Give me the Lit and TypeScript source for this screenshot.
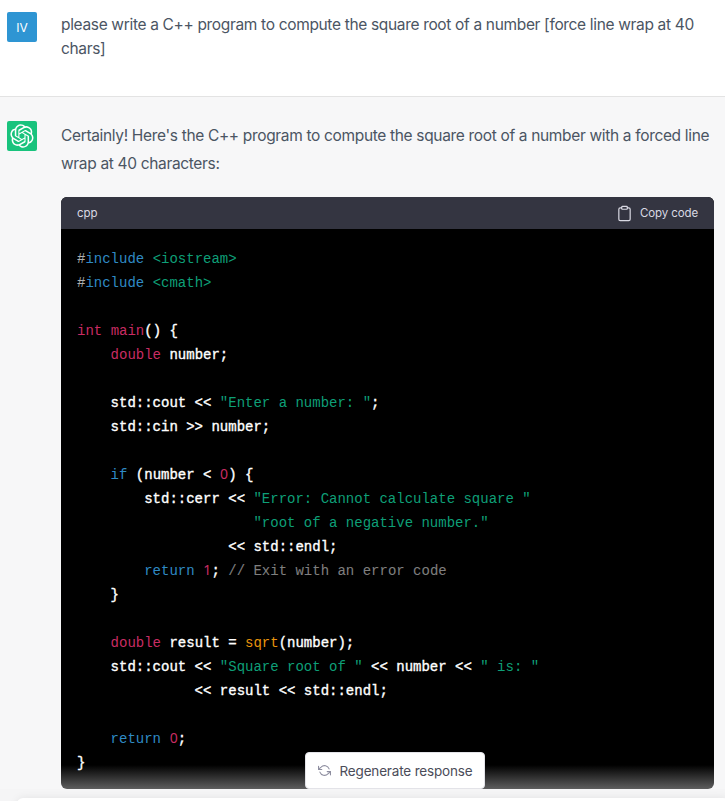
import { LitElement, html, css } from "lit";
import { customElement } from "lit/decorators.js";

type Tok = [string, string];
const K = "k", S = "s", N = "n", F = "f", C = "c", P = "p", R = "r", T = "t";
const sp = (n: number) => " ".repeat(n);

const lines: Tok[][] = [
  [[P, "#"], [K, "include"], [T, " "], [S, "<iostream>"]],
  [[P, "#"], [K, "include"], [T, " "], [S, "<cmath>"]],
  [],
  [[R, "int"], [T, " "], [R, "main"], [T, "() {"]],
  [[T, sp(4)], [R, "double"], [T, " number;"]],
  [],
  [[T, sp(4) + "std::cout << "], [S, "\"Enter a number: \""], [T, ";"]],
  [[T, sp(4) + "std::cin >> number;"]],
  [],
  [[T, sp(4)], [K, "if"], [T, " (number < "], [N, "0"], [T, ") {"]],
  [[T, sp(8) + "std::cerr << "], [S, "\"Error: Cannot calculate square \""]],
  [[T, sp(21)], [S, "\"root of a negative number.\""]],
  [[T, sp(18) + "<< std::endl;"]],
  [[T, sp(8)], [K, "return"], [T, " "], [N, "1"], [T, "; "], [C, "// Exit with an error code"]],
  [[T, sp(4) + "}"]],
  [],
  [[T, sp(4)], [R, "double"], [T, " result = "], [F, "sqrt"], [T, "(number);"]],
  [[T, sp(4) + "std::cout << "], [S, "\"Square root of \""], [T, " << number << "], [S, "\" is: \""]],
  [[T, sp(14) + "<< result << std::endl;"]],
  [],
  [[T, sp(4)], [K, "return"], [T, " "], [N, "0"], [T, ";"]],
  [[T, "}"]],
];

const logo = "M37.5324 16.8707C37.9808 15.5241 38.1363 14.0974 37.9886 12.6859C37.8409 11.2744 37.3934 9.91076 36.676 8.68622C35.6126 6.83404 33.9882 5.3676 32.0373 4.4985C30.0864 3.62941 27.9098 3.40259 25.8215 3.85078C24.8796 2.7893 23.7219 1.94125 22.4257 1.36341C21.1295 0.785575 19.7249 0.491269 18.3058 0.500197C16.1708 0.495044 14.0893 1.16803 12.3614 2.42214C10.6335 3.67624 9.34853 5.44666 8.6917 7.47815C7.30085 7.76286 5.98686 8.3414 4.8377 9.17505C3.68854 10.0087 2.73073 11.0782 2.02839 12.312C0.956464 14.1591 0.498905 16.2988 0.721698 18.4228C0.944492 20.5467 1.83612 22.5449 3.268 24.1293C2.81966 25.4759 2.66413 26.9026 2.81182 28.3141C2.95951 29.7256 3.40701 31.0892 4.12437 32.3138C5.18791 34.1659 6.8123 35.6322 8.76321 36.5013C10.7141 37.3704 12.8907 37.5973 14.9789 37.1492C15.9208 38.2107 17.0786 39.0587 18.3747 39.6366C19.6709 40.2144 21.0755 40.5087 22.4946 40.4998C24.6307 40.5054 26.7133 39.8321 28.4418 38.5772C30.1704 37.3223 31.4556 35.5506 32.1119 33.5179C33.5027 33.2332 34.8167 32.6547 35.9659 31.821C37.115 30.9874 38.0728 29.9178 38.7752 28.684C39.8458 26.8371 40.3023 24.6979 40.0789 22.5748C39.8556 20.4517 38.9639 18.4544 37.5324 16.8707ZM22.4978 37.8849C20.7443 37.8874 19.0459 37.2733 17.6994 36.1501C17.7601 36.117 17.8666 36.0586 17.936 36.0161L25.9004 31.4156C26.1003 31.3019 26.2663 31.137 26.3813 30.9378C26.4964 30.7386 26.5563 30.5124 26.5549 30.2825V19.0542L29.9213 20.998C29.9389 21.0068 29.9541 21.0198 29.9656 21.0359C29.977 21.052 29.9842 21.0707 29.9867 21.0902V30.3889C29.9842 32.375 29.1946 34.2791 27.7909 35.6841C26.3872 37.0892 24.4838 37.8806 22.4978 37.8849ZM6.39227 31.0064C5.51397 29.4888 5.19742 27.7107 5.49804 25.9832C5.55718 26.0187 5.66048 26.0818 5.73461 26.1244L13.699 30.7248C13.8975 30.8408 14.1233 30.902 14.3532 30.902C14.583 30.902 14.8088 30.8408 15.0073 30.7248L24.731 25.1103V28.9979C24.7321 29.0177 24.7283 29.0376 24.7199 29.0556C24.7115 29.0736 24.6988 29.0893 24.6829 29.1012L16.6317 33.7497C14.9096 34.7416 12.8643 35.0097 10.9447 34.4954C9.02506 33.9811 7.38785 32.7263 6.39227 31.0064ZM4.29707 13.6194C5.17156 12.0998 6.55279 10.9364 8.19885 10.3327C8.19885 10.4013 8.19491 10.5228 8.19491 10.6071V19.808C8.19351 20.0378 8.25334 20.2638 8.36823 20.4629C8.48312 20.6619 8.64893 20.8267 8.84863 20.9404L18.5723 26.5542L15.206 28.4979C15.1894 28.5089 15.1703 28.5155 15.1505 28.5173C15.1307 28.5191 15.1107 28.516 15.0924 28.5082L7.04046 23.8557C5.32135 22.8601 4.06716 21.2235 3.55289 19.3046C3.03862 17.3858 3.30624 15.3413 4.29707 13.6194ZM31.955 20.0556L22.2312 14.4411L25.5976 12.4981C25.6142 12.4872 25.6333 12.4805 25.6531 12.4787C25.6729 12.4769 25.6928 12.4801 25.7111 12.4879L33.7631 17.1364C34.9967 17.849 36.0017 18.8982 36.6606 20.1613C37.3194 21.4244 37.6047 22.849 37.4832 24.2684C37.3617 25.6878 36.8382 27.0432 35.9743 28.1759C35.1103 29.3086 33.9415 30.1717 32.6047 30.6641C32.6047 30.5947 32.6047 30.4733 32.6047 30.3889V21.188C32.6066 20.9586 32.5474 20.7328 32.4332 20.5338C32.319 20.3348 32.154 20.1698 31.955 20.0556ZM35.3055 15.0128C35.2464 14.9765 35.1431 14.9142 35.069 14.8717L27.1045 10.2712C26.906 10.1554 26.6803 10.0943 26.4504 10.0943C26.2206 10.0943 25.9948 10.1554 25.7963 10.2712L16.0726 15.8858V11.9982C16.0715 11.9783 16.0753 11.9585 16.0837 11.9405C16.0921 11.9225 16.1048 11.9068 16.1207 11.8949L24.1719 7.25025C25.4053 6.53903 26.8158 6.19376 28.2383 6.25482C29.6608 6.31589 31.0364 6.78077 32.2044 7.59508C33.3723 8.40939 34.2842 9.53945 34.8334 10.8531C35.3826 12.1667 35.5464 13.6095 35.3055 15.0128ZM14.2424 21.9419L10.8752 19.9981C10.8576 19.9893 10.8423 19.9763 10.8309 19.9602C10.8195 19.9441 10.8122 19.9254 10.8098 19.9058V10.6071C10.8107 9.18295 11.2173 7.78848 11.9819 6.58696C12.7466 5.38544 13.8377 4.42659 15.1275 3.82264C16.4173 3.21869 17.8524 2.99464 19.2649 3.1767C20.6775 3.35876 22.0089 3.93941 23.1034 4.85067C23.0427 4.88379 22.937 4.94215 22.8668 4.98473L14.9024 9.58517C14.7025 9.69878 14.5366 9.86356 14.4215 10.0626C14.3065 10.2616 14.2466 10.4877 14.2479 10.7175L14.2424 21.9419ZM16.071 17.9991L20.4018 15.4978L24.7325 17.9975V22.9985L20.4018 25.4983L16.071 22.9985V17.9991Z";

@customElement("app-root")
export class AppRoot extends LitElement {
  static styles = css`
    :host { display: block; position: relative; height: 801px; overflow: hidden; background: #f7f7f8;
      font-family: Inter, "Liberation Sans", sans-serif; color: #4b5563; }
    .row { display: flex; gap: 24px; padding: 12px 11px 0 7px; }
    .user { background: #fff; height: 84px; border-bottom: 1px solid #e3e3e3; }
    .bot { padding-top: 24px; }
    .av { flex: none; width: 30px; height: 30px; border-radius: 2px; display: flex; align-items: center;
      justify-content: center; color: #fff; }
    .iv { background: #2e95d3; font-size: 12px; }
    .gpt { background: #19c37d; }
    .gpt svg { width: 24px; height: 24px; }
    .body { flex: 1; min-width: 0; }
    p { margin: 0; font-size: 15.5px; letter-spacing: -0.335px; padding-top: 1px; }
    .msg1 { line-height: 24px; }
    .msg2 { line-height: 28px; margin-bottom: 19px; }
    .code { border-radius: 6px; overflow: hidden; background: #000; }
    .head { height: 32px; background: #343541; color: #d9d9e3; display: flex; align-items: center;
      justify-content: space-between; padding: 0 16px; font-size: 11.5px; letter-spacing: -0.1px; }
    .copy { display: flex; align-items: center; gap: 7px; }
    .copy svg { width: 17px; height: 17px; }
    pre { margin: 0; padding: 18px 16px 14px; font-family: "Liberation Mono", monospace; font-size: 14px; line-height: 24px;
      color: #fff; -webkit-text-stroke: 0.35px #fff; }
    .line { display: block; height: 24px; white-space: pre; }
    .k, .s, .n, .f, .c, .r, .p { -webkit-text-stroke: 0; }
    .k { color: #2f8ac4; }
    .s { color: #0e9f77; }
    .n { color: #c92c63; font-family: "Noto Sans", sans-serif; display: inline-block; width: 8.4px;
      text-align: center; line-height: 14px; }
    .r { color: #c92c63; }
    .f { color: #e9950c; }
    .c { color: #ffffff80; }
    .p { color: #ffffffb0; }
    .fade { position: absolute; left: 0; right: 0; bottom: 12px; height: 24px;
      background: linear-gradient(to bottom, rgba(247,247,248,0), rgba(247,247,248,0.38)); pointer-events: none; }
    .under { position: absolute; left: 0; right: 0; bottom: 0; height: 12px; background: #f5f5f6; }
    .input { position: absolute; left: 17px; right: -4px; top: 9px; height: 20px; background: #fff;
      border-radius: 6px; box-shadow: 0 0 8px rgba(0,0,0,.08); }
    .regen { position: absolute; left: 305px; top: 752px; width: 180px; height: 37px; box-sizing: border-box;
      background: #fff; border: 1px solid #e3e3e8; border-radius: 4px; display: flex; align-items: center;
      justify-content: center; gap: 9px; font-size: 13.5px; color: #4b4c59; letter-spacing: -0.17px; }
    .regen svg { width: 13px; height: 13px; color: #8e8ea0; }
  `;

  render() {
    return html`
      <div class="row user">
        <div class="av iv">IV</div>
        <div class="body">
          <p class="msg1">please write a C++ program to compute the square root of a number [force line wrap at 40 chars]</p>
        </div>
      </div>
      <div class="row bot">
        <div class="av gpt">
          <svg viewBox="0 0 41 41" fill="none"><path fill="currentColor" d=${logo}></path></svg>
        </div>
        <div class="body">
          <p class="msg2">Certainly! Here's the C++ program to compute the square root of a number with a forced line wrap at 40 characters:</p>
          <div class="code">
            <div class="head">
              <span>cpp</span>
              <span class="copy">
                <svg viewBox="0 0 24 24" fill="none" stroke="currentColor" stroke-width="1.7" stroke-linecap="round" stroke-linejoin="round">
                  <path d="M16 4h2a2 2 0 0 1 2 2v14a2 2 0 0 1-2 2H6a2 2 0 0 1-2-2V6a2 2 0 0 1 2-2h2"></path>
                  <rect x="8" y="2" width="8" height="4" rx="1" ry="1"></rect>
                </svg>
                Copy code
              </span>
            </div>
            <pre>${lines.map(
              (l) => html`<span class="line">${l.map(([c, t]) => html`<span class=${c}>${t}</span>`)}</span>`
            )}</pre>
          </div>
        </div>
      </div>
      <div class="fade"></div>
      <div class="under"><div class="input"></div></div>
      <div class="regen">
        <svg viewBox="0 0 24 24" fill="none" stroke="currentColor" stroke-width="2" stroke-linecap="round" stroke-linejoin="round">
          <polyline points="1 4 1 10 7 10"></polyline>
          <polyline points="23 20 23 14 17 14"></polyline>
          <path d="M20.49 9A9 9 0 0 0 5.64 5.64L1 10m22 4l-4.64 4.36A9 9 0 0 1 3.51 15"></path>
        </svg>
        Regenerate response
      </div>
    `;
  }
}
